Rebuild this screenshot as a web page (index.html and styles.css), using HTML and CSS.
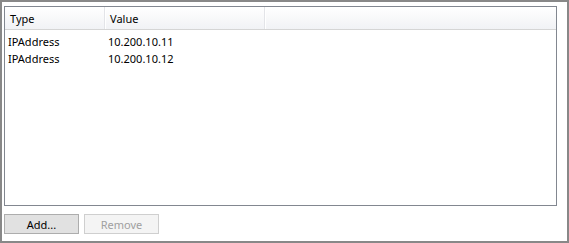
FILE: index.html
```html
<!DOCTYPE html>
<html lang="en">
<head>
    <meta charset="UTF-8">
    <meta name="viewport" content="width=device-width, initial-scale=1.0">
    <title>Addresses</title>
    <link rel="stylesheet" href="styles.css">
</head>
<body>
    <div class="frame">
        <div class="list-view">
            <div class="list-header">
                <div class="col col-type">Type</div>
                <div class="col col-value">Value</div>
                <div class="col col-fill"></div>
            </div>
            <div class="list-body">
                <div class="list-row">
                    <div class="cell col-type">IPAddress</div>
                    <div class="cell col-value">10.200.10.11</div>
                </div>
                <div class="list-row">
                    <div class="cell col-type">IPAddress</div>
                    <div class="cell col-value">10.200.10.12</div>
                </div>
            </div>
        </div>

        <div class="actions">
            <button class="btn">Add...</button>
            <button class="btn" disabled>Remove</button>
        </div>
    </div>
</body>
</html>
```

FILE: styles.css
```css
* {
    box-sizing: border-box;
}

body {
    margin: 0;
    font-family: 'Noto Sans', 'Open Sans', sans-serif;
    font-size: 11px;
    color: #000;
    background: #fff;
}

.frame {
    width: 569px;
    height: 243px;
    border: 2px solid #888888;
    padding: 4px 10px 0 2px;
}

.list-view {
    height: 200px;
    border: 1px solid #828790;
    background: #fff;
}

.list-header {
    display: flex;
    height: 23px;
    background: linear-gradient(#ffffff, #f1f2f5);
    border-bottom: 1px solid #d5d5d5;
}

.col {
    height: 100%;
    padding-left: 5px;
    line-height: 24px;
    border-right: 1px solid #e3e4e8;
    box-shadow: 1px 0 0 #fff;
}

.col-type {
    width: 100px;
}

.col-value {
    width: 160px;
}

.col-fill {
    flex: 1;
    border-right: none;
    box-shadow: none;
}

.list-body {
    padding-top: 3px;
}

.list-row {
    display: flex;
    height: 17px;
    line-height: 17px;
}

.cell {
    padding-left: 3px;
}

.actions {
    display: flex;
    gap: 5px;
    margin-top: 8px;
}

.btn {
    width: 75px;
    height: 20px;
    padding: 0;
    font-family: inherit;
    font-size: 11px;
    color: #000;
    background: #e1e1e1;
    border: 1px solid #adadad;
    border-radius: 0;
}

.btn:disabled {
    color: #a0a0a0;
    background: #f4f4f4;
    border-color: #cfcfcf;
}
```
